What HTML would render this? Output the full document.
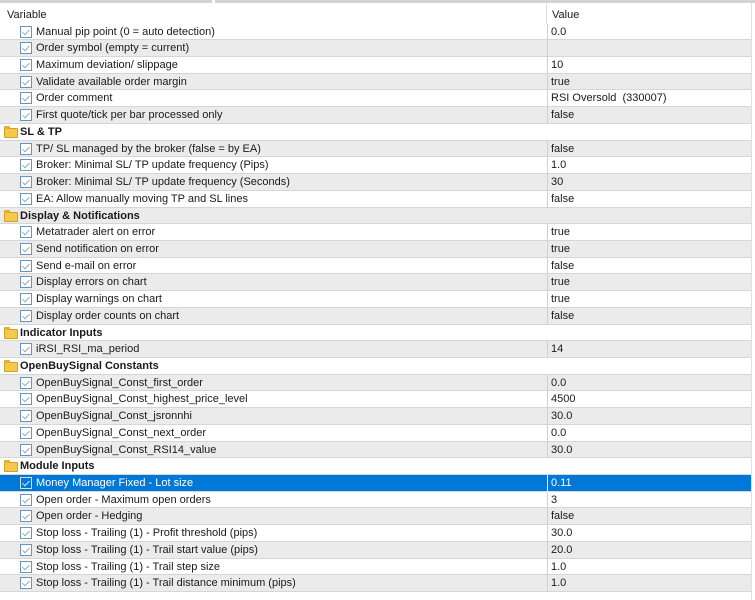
<!DOCTYPE html>
<html><head><meta charset="utf-8"><style>
*{margin:0;padding:0;box-sizing:border-box}
body{width:755px;height:600px;overflow:hidden;background:#fff;font-family:"Liberation Sans",sans-serif;font-size:11px;color:#1a1a1a;position:relative}
.top{position:absolute;left:0;top:0;width:755px;height:3px;background:#d4d4d4}
.top:after{content:"";position:absolute;left:212px;top:0;width:3px;height:3px;background:#fff}
.hdr{position:absolute;left:0;top:3px;width:752px;height:21px;border-right:1px solid #e0e0e0}
.hdr span{position:absolute;top:6px}
.vl{position:absolute;left:546px;top:3px;width:1px;height:21px;background:#e0e0e0}
.rows{position:absolute;left:0;top:23.6px;width:751px}
.r{height:16.73px;position:relative;border-bottom:1px solid #d6d6d6;background:#fff}
.r.g{background:#ebebeb}
.r.s{background:#0078d7;color:#fff}
.r .n{position:absolute;left:36px;top:2px;white-space:nowrap}
.r .v{position:absolute;left:547px;top:0;bottom:-1px;border-left:1px solid #d0d0d0;padding-left:3px;padding-top:2px;width:204px}
.r.s .v{border-left-color:#fff}
.cb{position:absolute;left:20px;top:2px;width:12px;height:12px;border:1px solid #6a94bb;background:#fff}
.cb:after{content:"";position:absolute;left:3px;top:1px;width:3px;height:6px;border:solid #9ab;border-width:0 1px 1px 0;transform:rotate(45deg)}
.r.s .cb{border-color:#cde;background:#0078d7}
.r.s .cb:after{border-color:#dde}
.grp .n{left:20px;font-weight:bold}
.grp .v{border-left:none}
.fd{position:absolute;left:4px;top:4px;width:14px;height:10px;background:#f2c94c;border:1px solid #d4a21a;border-radius:1px}
.fd:before{content:"";position:absolute;left:-1px;top:-3px;width:6px;height:3px;background:#e0b030;border-radius:1px 1px 0 0}
.rl{position:absolute;left:751px;top:3px;width:1px;height:597px;background:#e0e0e0}
</style></head><body>
<div class="top"></div>
<div class="hdr"><span style="left:7px">Variable</span><span style="left:552px">Value</span></div>
<div class="vl"></div>
<div class="rows">
<div class="r"><i class="cb"></i><span class="n">Manual pip point (0 = auto detection)</span><span class="v">0.0</span></div>
<div class="r g"><i class="cb"></i><span class="n">Order symbol (empty = current)</span><span class="v"></span></div>
<div class="r"><i class="cb"></i><span class="n">Maximum deviation/ slippage</span><span class="v">10</span></div>
<div class="r g"><i class="cb"></i><span class="n">Validate available order margin</span><span class="v">true</span></div>
<div class="r"><i class="cb"></i><span class="n">Order comment</span><span class="v">RSI Oversold&nbsp; (330007)</span></div>
<div class="r g"><i class="cb"></i><span class="n">First quote/tick per bar processed only</span><span class="v">false</span></div>
<div class="r grp"><i class="fd"></i><span class="n">SL &amp; TP</span></div>
<div class="r g"><i class="cb"></i><span class="n">TP/ SL managed by the broker (false = by EA)</span><span class="v">false</span></div>
<div class="r"><i class="cb"></i><span class="n">Broker: Minimal SL/ TP update frequency (Pips)</span><span class="v">1.0</span></div>
<div class="r g"><i class="cb"></i><span class="n">Broker: Minimal SL/ TP update frequency (Seconds)</span><span class="v">30</span></div>
<div class="r"><i class="cb"></i><span class="n">EA: Allow manually moving TP and SL lines</span><span class="v">false</span></div>
<div class="r g grp"><i class="fd"></i><span class="n">Display &amp; Notifications</span></div>
<div class="r"><i class="cb"></i><span class="n">Metatrader alert on error</span><span class="v">true</span></div>
<div class="r g"><i class="cb"></i><span class="n">Send notification on error</span><span class="v">true</span></div>
<div class="r"><i class="cb"></i><span class="n">Send e-mail on error</span><span class="v">false</span></div>
<div class="r g"><i class="cb"></i><span class="n">Display errors on chart</span><span class="v">true</span></div>
<div class="r"><i class="cb"></i><span class="n">Display warnings on chart</span><span class="v">true</span></div>
<div class="r g"><i class="cb"></i><span class="n">Display order counts on chart</span><span class="v">false</span></div>
<div class="r grp"><i class="fd"></i><span class="n">Indicator Inputs</span></div>
<div class="r g"><i class="cb"></i><span class="n">iRSI_RSI_ma_period</span><span class="v">14</span></div>
<div class="r grp"><i class="fd"></i><span class="n">OpenBuySignal Constants</span></div>
<div class="r g"><i class="cb"></i><span class="n">OpenBuySignal_Const_first_order</span><span class="v">0.0</span></div>
<div class="r"><i class="cb"></i><span class="n">OpenBuySignal_Const_highest_price_level</span><span class="v">4500</span></div>
<div class="r g"><i class="cb"></i><span class="n">OpenBuySignal_Const_jsronnhi</span><span class="v">30.0</span></div>
<div class="r"><i class="cb"></i><span class="n">OpenBuySignal_Const_next_order</span><span class="v">0.0</span></div>
<div class="r g"><i class="cb"></i><span class="n">OpenBuySignal_Const_RSI14_value</span><span class="v">30.0</span></div>
<div class="r grp"><i class="fd"></i><span class="n">Module Inputs</span></div>
<div class="r s"><i class="cb"></i><span class="n">Money Manager Fixed - Lot size</span><span class="v">0.11</span></div>
<div class="r"><i class="cb"></i><span class="n">Open order - Maximum open orders</span><span class="v">3</span></div>
<div class="r g"><i class="cb"></i><span class="n">Open order - Hedging</span><span class="v">false</span></div>
<div class="r"><i class="cb"></i><span class="n">Stop loss - Trailing (1) - Profit threshold (pips)</span><span class="v">30.0</span></div>
<div class="r g"><i class="cb"></i><span class="n">Stop loss - Trailing (1) - Trail start value (pips)</span><span class="v">20.0</span></div>
<div class="r"><i class="cb"></i><span class="n">Stop loss - Trailing (1) - Trail step size</span><span class="v">1.0</span></div>
<div class="r g"><i class="cb"></i><span class="n">Stop loss - Trailing (1) - Trail distance minimum (pips)</span><span class="v">1.0</span></div>
</div>
<div class="rl"></div>
</body></html>
